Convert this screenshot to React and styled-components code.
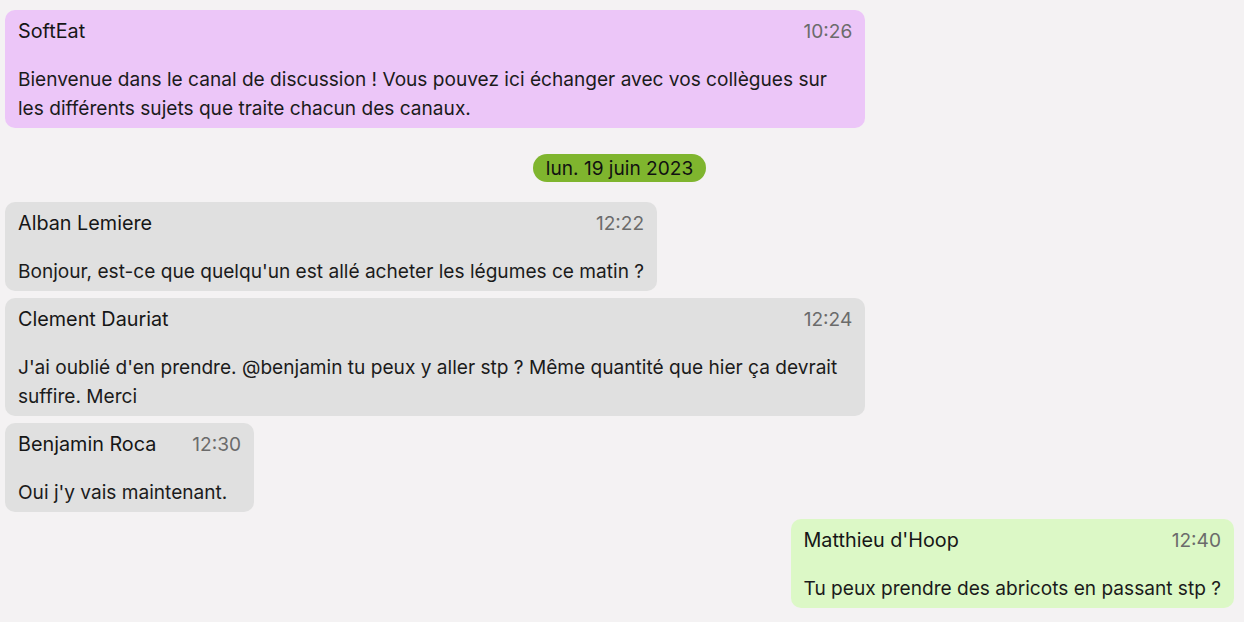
import styled, { createGlobalStyle } from "styled-components";

const GlobalStyle = createGlobalStyle`
    html, body {
        margin : 0;
        padding : 0;
        background-color : #f4f2f3;
        font-family : Inter, "Noto Sans", sans-serif;
        color : #1b1b1b;
    }
`

const messages = [
    { kind: "system", author: "SoftEat", time: "10:26", text: "Bienvenue dans le canal de discussion ! Vous pouvez ici échanger avec vos collègues sur les différents sujets que traite chacun des canaux." },
    { kind: "date", text: "lun. 19 juin 2023" },
    { kind: "other", author: "Alban Lemiere", time: "12:22", text: "Bonjour, est-ce que quelqu'un est allé acheter les légumes ce matin ?" },
    { kind: "other", author: "Clement Dauriat", time: "12:24", text: "J'ai oublié d'en prendre. @benjamin tu peux y aller stp ? Même quantité que hier ça devrait suffire. Merci" },
    { kind: "other", author: "Benjamin Roca", time: "12:30", text: "Oui j'y vais maintenant." },
    { kind: "mine", author: "Matthieu d'Hoop", time: "12:40", text: "Tu peux prendre des abricots en passant stp ?" },
];

const colors = {
    system : "#ecc6f8",
    other : "#e0e0e0",
    mine : "#dcf8c6",
};

const Feed = styled.div`
    display : flex;
    flex-direction : column;
    gap : 7px;
    padding : 10px 10px 14px 5px;
    box-sizing : border-box;
    min-height : 100vh;
`

const Bubble = styled.div`
    align-self : ${(p) => (p.$kind === "mine" ? "flex-end" : "flex-start")};
    max-width : 70%;
    box-sizing : border-box;
    padding : 7px 13px 5px 13px;
    border-radius : 10px;
    background-color : ${(p) => colors[p.$kind]};
    font-size : 19.1px;
    line-height : 29px;
`

const Header = styled.div`
    display : flex;
    flex-direction : row;
    justify-content : space-between;
    align-items : center;
    gap : 36px;
    margin-bottom : 19px;

    > .name {
        font-size : 19.8px;
        color : #161616;
    }

    > .time {
        color : #6b6b6b;
    }
`

const Body = styled.div`
    white-space : normal;
`

const DatePill = styled.div`
    align-self : center;
    margin : 19px 0 13px;
    padding : 0 13px;
    border-radius : 14px;
    background-color : #7fb52e;
    font-size : 19.1px;
    line-height : 28px;
    color : #111;
`

export default function App() {
    return (
        <>
            <GlobalStyle />
            <Feed>
                {messages.map((m, i) =>
                    m.kind === "date" ? (
                        <DatePill key={i}>{m.text}</DatePill>
                    ) : (
                        <Bubble key={i} $kind={m.kind}>
                            <Header>
                                <span className="name">{m.author}</span>
                                <span className="time">{m.time}</span>
                            </Header>
                            <Body>{m.text}</Body>
                        </Bubble>
                    )
                )}
            </Feed>
        </>
    );
}
